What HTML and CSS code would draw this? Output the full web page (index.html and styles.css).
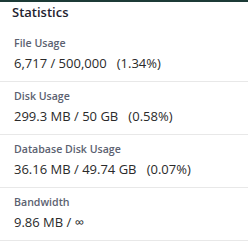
FILE: index.html
```html
<html>
  <head>
    <meta charset="UTF-8">
    <title>Statistics</title>
    <link rel="stylesheet" href="styles.css">
  </head>

  <body>
    <div class="top-bar"></div>

    <div class="stats-panel">
      <h2 class="stats-title">Statistics</h2>

      <div class="stats-item">
        <div class="stats-label">File Usage</div>
        <div class="stats-value">6,717 / 500,000   (1.34%)</div>
      </div>

      <div class="stats-item">
        <div class="stats-label">Disk Usage</div>
        <div class="stats-value">299.3 MB / 50 GB   (0.58%)</div>
      </div>

      <div class="stats-item">
        <div class="stats-label">Database Disk Usage</div>
        <div class="stats-value">36.16 MB / 49.74 GB   (0.07%)</div>
      </div>

      <div class="stats-item">
        <div class="stats-label">Bandwidth</div>
        <div class="stats-value">9.86 MB / ∞</div>
      </div>
    </div>
  </body>
</html>
```

FILE: styles.css
```css
body {
  margin: 0;
  background-color: white;
  font-family: "Open Sans", sans-serif;
}

.top-bar {
  height: 2px;
  background-color: #1c3a36;
}

.stats-title {
  margin: 0 0 7px 0;
  padding-left: 12px;
  font-size: 13px;
  line-height: 20px;
  font-weight: 600;
  color: #1f2330;
}

.stats-item {
  padding: 7px 14px 8px 14px;
  border-bottom: 1px solid #e8e8e8;
}

.stats-label {
  font-size: 10.6px;
  line-height: 15px;
  font-weight: 600;
  color: #5b6170;
}

.stats-value {
  margin-top: 2px;
  font-size: 13px;
  line-height: 20px;
  color: #2a2a2a;
  white-space: pre;
}
```
